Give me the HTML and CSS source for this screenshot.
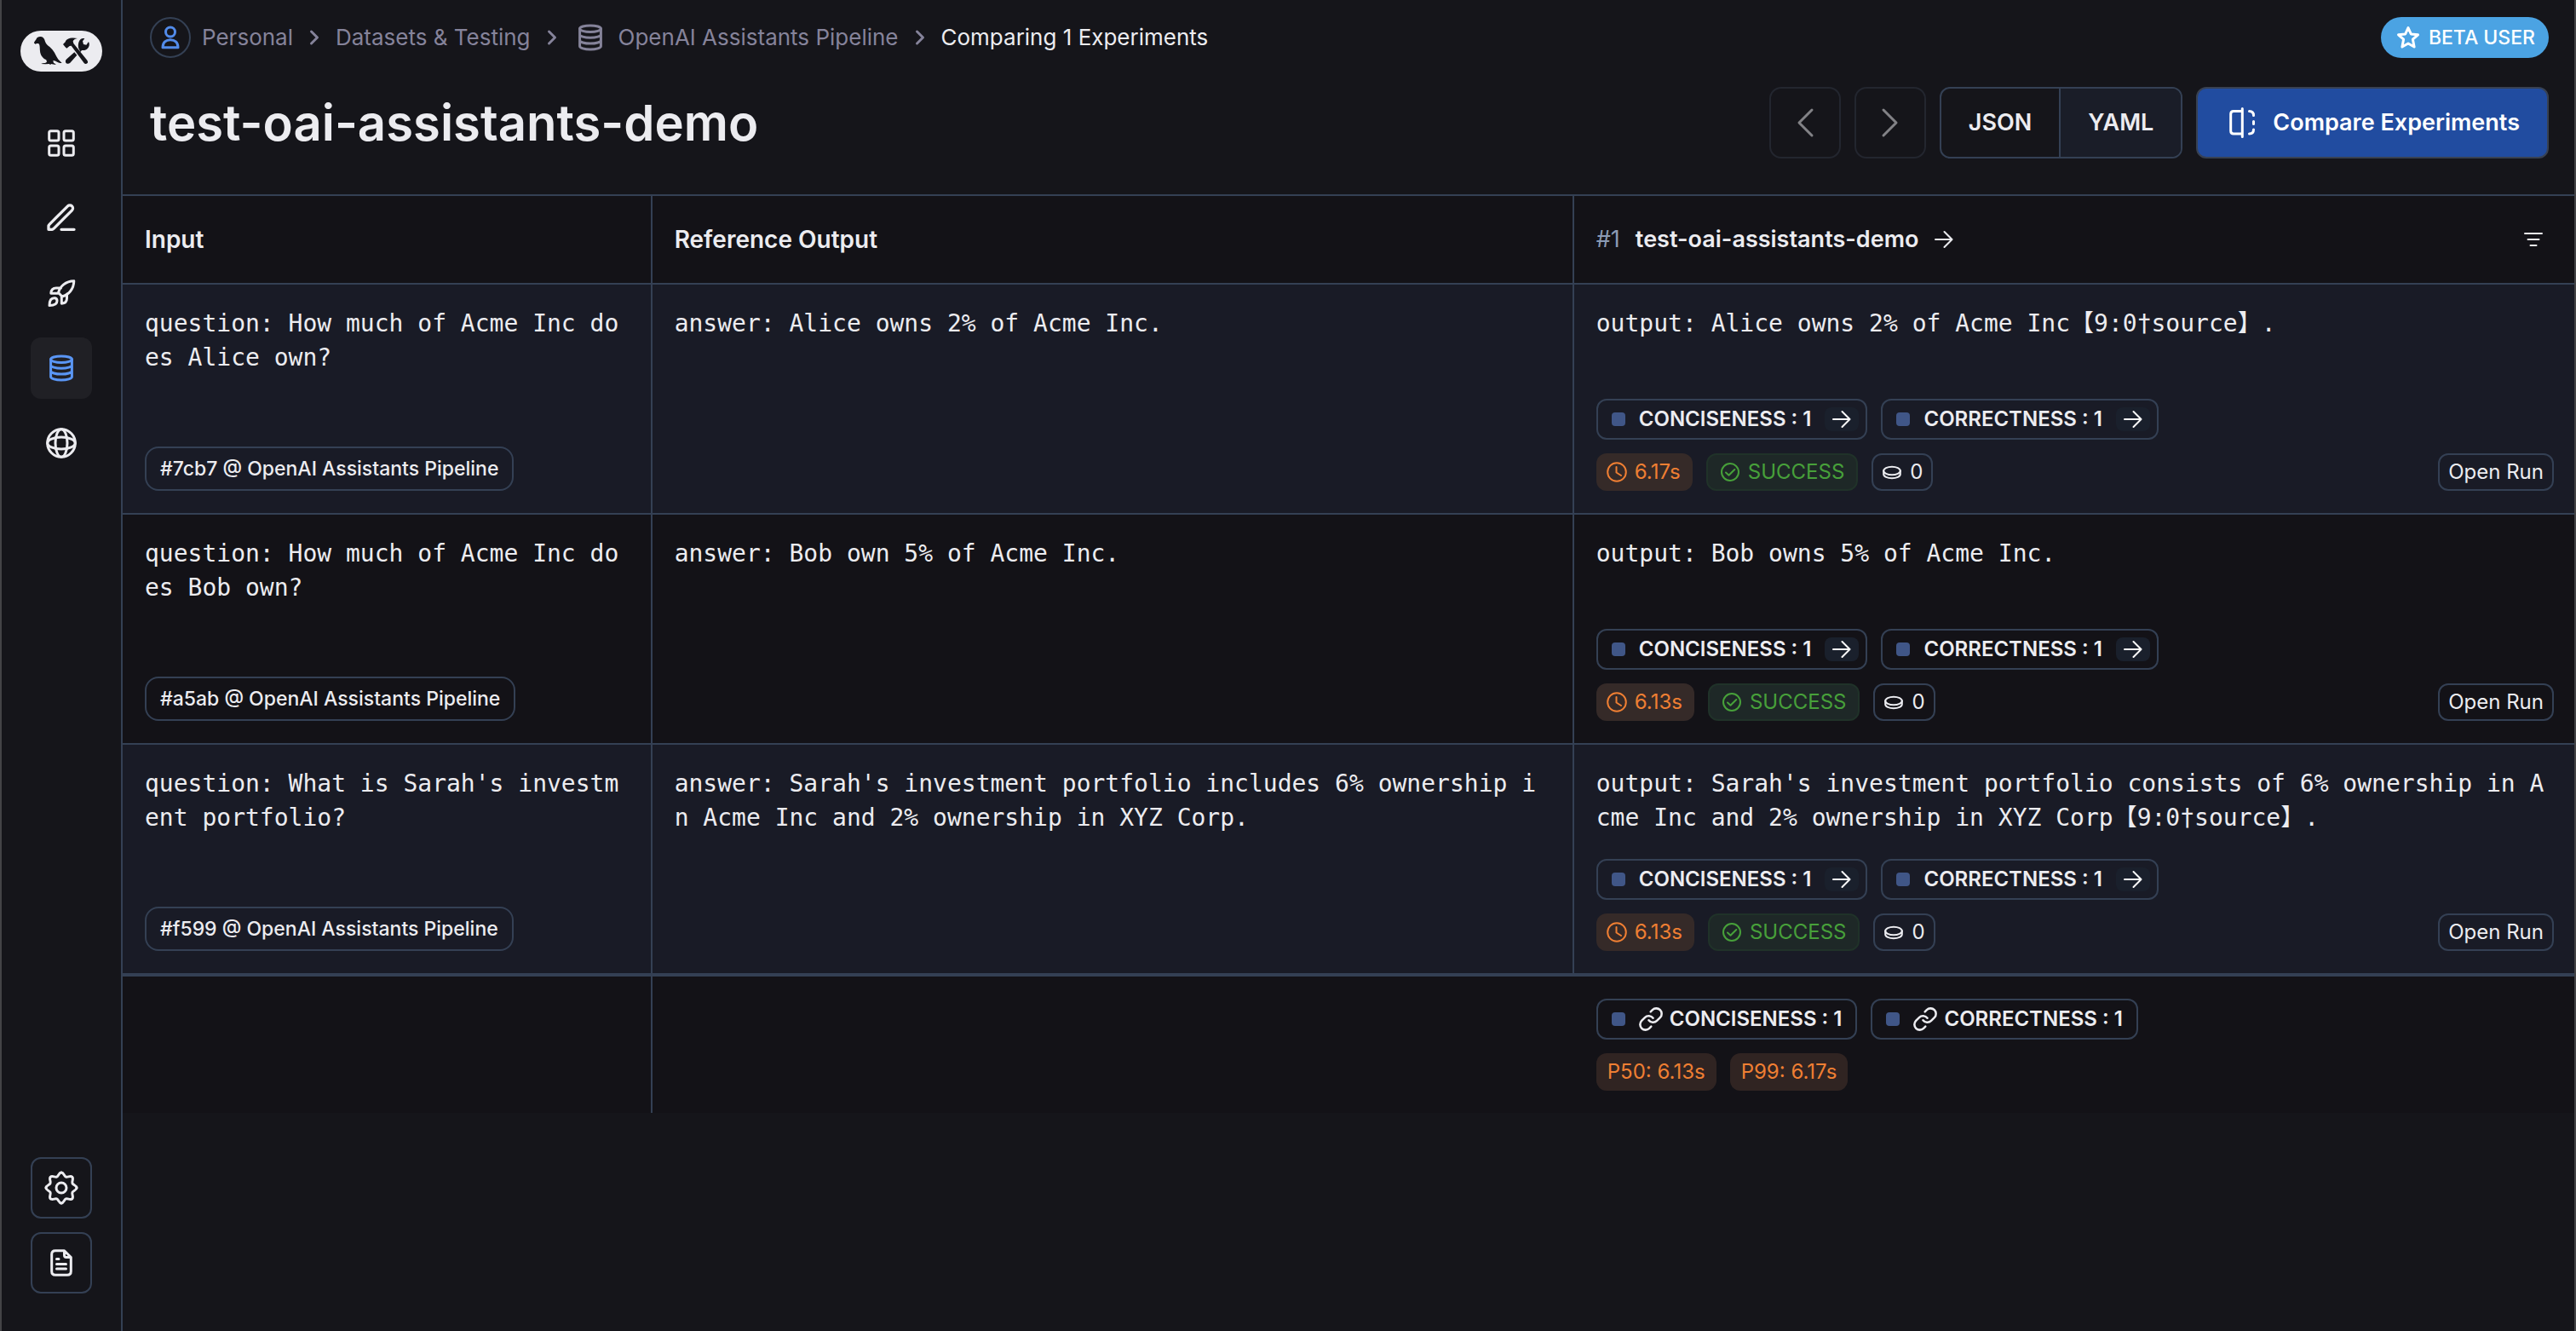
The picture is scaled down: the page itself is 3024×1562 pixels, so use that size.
FILE: index.html
```html
<!DOCTYPE html>
<html lang="en">
<head>
<meta charset="utf-8">
<meta name="viewport" content="width=device-width, initial-scale=1">
<title>Comparing 1 Experiments</title>
<link rel="stylesheet" href="styles.css">
</head>
<body>
<svg class="sprite" aria-hidden="true">
  <symbol id="i-db" viewBox="0 0 40 40"><ellipse cx="20" cy="9.7" rx="12.4" ry="3.8"/><path d="M7.6 9.7V30.2C7.6 32.3 13.1 34 20 34s12.4-1.7 12.4-3.8V9.7M7.6 16.5c0 2.1 5.5 3.8 12.4 3.8s12.4-1.7 12.4-3.8M7.6 23.3c0 2.1 5.5 3.8 12.4 3.8s12.4-1.7 12.4-3.8"/></symbol>
  <symbol id="i-sep" viewBox="0 0 24 24"><path d="M8.500 5l7 7-7 7"/></symbol>
  <symbol id="i-arrow" viewBox="0 0 24 24"><path d="M2 12h19M12.500 3L21.500 12l-9 9"/></symbol>
  <symbol id="i-clock" viewBox="0 0 24 24"><circle cx="12" cy="12" r="10.800"/><path d="M11.500 6v6.500l5.500 3.500"/></symbol>
  <symbol id="i-check" viewBox="0 0 24 24"><circle cx="12" cy="12" r="10"/><path d="M7 12.500l3.500 3.200 6.800-6.700"/></symbol>
  <symbol id="i-coin" viewBox="0 0 24 24"><ellipse cx="12" cy="10.500" rx="9.800" ry="4.800"/><path d="M2.200 10.500v4c0 2.700 4.400 4.800 9.800 4.800s9.800-2.100 9.800-4.800v-4"/></symbol>
  <symbol id="i-link" viewBox="1 1 22 22"><path d="M10 13a5 5 0 0 0 7.540.540l3-3a5 5 0 0 0-7.070-7.070l-1.720 1.710M14 11a5 5 0 0 0-7.540-.540l-3 3a5 5 0 0 0 7.070 7.070l1.710-1.710"/></symbol>
</svg>
<div class="app">
  <aside class="sidebar">
    <a class="logo" href="#" aria-label="Home">
      <svg viewBox="72 108 288 144" aria-hidden="true">
        <path d="M120 153c0-8 6-11 8-16 2-6 9-9 16-8 8 1 13 8 15 17 2 8 9 13 16 19 15 13 20 27 27 39 4 7 10 12 16 18-9 0-15-2-22-7-3-1-6-2-9-2l2 9c4 1 6 3 8 6l-17-3-3 4-3-4-14 1-15-1c3-3 9-3 14-3l6-4-2-7c-12-5-21-17-22-31-1-9 0-17-3-25l-4-2c-4 0-9 0-9 4l-2-4z"/>
        <path d="M222 156l8-8c1-7 8-12 17-14 9-1 18-1 26 1-9 2-14 5-16 10l2 8 48 59c3 5 3 8 0 11-3 3-8 3-11-1l-45-61-6 1-10 8-5-4z"/>
        <path d="M276 168c-2-12 1-24 8-30 4-3 9-4 14-2l-7 9 3 11 10 2 8-11c5 9 2 20-6 26-5 4-12 4-18 4l-5 6zM262 184l9 10-24 27c-5 5-12 4-15 0-2-4-2-9 3-13z"/>
      </svg>
    </a>
    <nav class="side-nav" aria-label="Main">
      <a class="side-item" href="#" aria-label="Dashboard"><svg class="icon i40" viewBox="0 0 40 40"><rect x="5.700" y="5.700" width="11.300" height="11.300" rx="2"/><rect x="23" y="5.700" width="11.300" height="11.300" rx="2"/><rect x="5.700" y="23" width="11.300" height="11.300" rx="2"/><rect x="23" y="23" width="11.300" height="11.300" rx="2"/></svg></a>
      <a class="side-item" href="#" aria-label="Annotate"><svg class="icon pen" viewBox="0 0 24 24"><path d="M12 20h9M3 20h1.700c.500 0 .700 0 .900-.100.200 0 .400-.100.600-.200.200-.100.400-.300.700-.600L19.500 6.500c.800-.800.800-2.200 0-3s-2.200-.800-3 0L3.900 16.100c-.300.300-.500.500-.600.700-.100.200-.200.400-.300.600V20z"/></svg></a>
      <a class="side-item" href="#" aria-label="Deployments"><svg class="icon i40" viewBox="0 0 40 40"><path d="M16.500 19.500C18.500 12 25 6 34.800 5.800 34.600 15.500 28.500 22 21 24zM19.500 14H14c-4 0-6 2.500-6.200 6.200h8.500M26.500 21v5c0 4-2.500 6-6.200 6.200V24M6 34.500C6 29 8 25.800 11.800 25.800c2 0 3.200 1.200 3.200 3.200 0 3.700-3.500 5.500-9 5.500z"/></svg></a>
      <a class="side-item active" href="#" aria-label="Datasets and testing" aria-current="page"><svg class="icon i40"><use href="#i-db"/></svg></a>
      <a class="side-item" href="#" aria-label="Hub"><svg class="icon i40" viewBox="0 0 40 40"><circle cx="20" cy="20" r="16.300"/><ellipse cx="20" cy="20" rx="7" ry="16.300"/><ellipse cx="20" cy="20" rx="16.300" ry="7"/></svg></a>
    </nav>
    <div class="side-foot">
      <button class="side-button" type="button" aria-label="Settings"><svg class="icon i40" viewBox="-20 -20 40 40"><circle r="6"/><path id="tooth" d="M0-18C3-18 3.140-13.850 5.360-12.930 7.580-12.010 10.610-14.850 12.730-12.730"/><use href="#tooth" transform="rotate(45)"/><use href="#tooth" transform="rotate(90)"/><use href="#tooth" transform="rotate(135)"/><use href="#tooth" transform="rotate(180)"/><use href="#tooth" transform="rotate(225)"/><use href="#tooth" transform="rotate(270)"/><use href="#tooth" transform="rotate(315)"/></svg></button>
      <button class="side-button" type="button" aria-label="Documentation"><svg class="icon i40" viewBox="0 0 40 40"><path d="M23.500 5.700H13c-3 0-4.300 1.300-4.300 4.300v20c0 3 1.300 4.300 4.300 4.300h14c3 0 4.300-1.300 4.300-4.300V13.500zM23.500 5.700v5.600c0 1.500.700 2.200 2.200 2.200h5.600M14.500 15.500H17M14.500 21.500h11M14.500 27h11"/></svg></button>
    </div>
  </aside>

  <main class="main">
    <header class="page-head">
      <div class="topline">
        <nav aria-label="Breadcrumb">
          <ol class="crumbs">
            <li><a class="crumb person" href="#"><span class="avatar"><svg class="icon i28" viewBox="0 0 28 28"><circle cx="14" cy="7.500" r="5.500"/><path d="M5 25.700c0-6 4-9 9-9s9 3 9 9z"/></svg></span>Personal</a></li>
            <li><svg class="icon i24"><use href="#i-sep"/></svg><a class="crumb" href="#">Datasets &amp; Testing</a></li>
            <li><svg class="icon i24"><use href="#i-sep"/></svg><a class="crumb" href="#"><svg class="icon i40"><use href="#i-db"/></svg>OpenAI Assistants Pipeline</a></li>
            <li><svg class="icon i24"><use href="#i-sep"/></svg><span class="current" aria-current="page">Comparing 1 Experiments</span></li>
          </ol>
        </nav>
        <span class="beta"><svg class="icon i28" viewBox="0 0 28 28"><path d="M14 2.500l3.300 7.400 8.200.900-6.100 5.400 1.700 8.800L14 21l-7.100 4 1.700-8.800-6.100-5.400 8.200-.900z"/></svg>BETA USER</span>
      </div>
      <div class="titleline">
        <h1>test-oai-assistants-demo</h1>
        <div class="actions">
          <button class="pager" type="button" disabled aria-label="Previous"><svg class="icon i40" viewBox="0 0 40 40"><path d="M28 5L13 20l15 15"/></svg></button>
          <button class="pager" type="button" disabled aria-label="Next"><svg class="icon i40" viewBox="0 0 40 40"><path d="M12 5l15 15-15 15"/></svg></button>
          <div class="format" role="group" aria-label="Format">
            <button type="button">JSON</button>
            <button class="selected" type="button" aria-pressed="true">YAML</button>
          </div>
          <button class="compare" type="button"><svg class="icon compare-icon" viewBox="0 0 36 40"><path d="M18.300 6.500H8c-2.200 0-3.300 1.100-3.300 3.300v20c0 2.200 1.100 3.300 3.300 3.300h10.300M18.300 3.500v33M26.500 6.500c3 0 5 1 5 5M31.500 18.500v3M26.500 33c3 0 5-1 5-5"/></svg>Compare Experiments</button>
        </div>
      </div>
    </header>

    <table class="results">
      <colgroup><col class="col-input"><col class="col-reference"><col class="col-output"></colgroup>
      <thead>
        <tr>
          <th scope="col">Input</th>
          <th scope="col">Reference Output</th>
          <th scope="col"><div class="exp-head"><span class="exp-num">#1</span><a class="exp-name" href="#">test-oai-assistants-demo<svg class="icon i24"><use href="#i-arrow"/></svg></a><button class="filter" type="button" aria-label="Filter"><svg class="icon i24" viewBox="0 0 24 24"><path d="M2 5h20M5.500 12h13M8.500 19h7"/></svg></button></div></th>
        </tr>
      </thead>
      <tbody>
        <tr>
          <td><div class="cell"><p>question: How much of Acme Inc does Alice own?</p><a class="source" href="#">#7cb7 @ OpenAI Assistants Pipeline</a></div></td>
          <td><div class="cell"><p>answer: Alice owns 2% of Acme Inc.</p></div></td>
          <td><div class="cell"><p>output: Alice owns 2% of Acme Inc【9:0†source】.</p>
            <div class="meta">
              <div class="chips"><a class="metric" href="#"><i class="swatch"></i>CONCISENESS : 1<span class="go"><svg class="icon i24"><use href="#i-arrow"/></svg></span></a><a class="metric" href="#"><i class="swatch"></i>CORRECTNESS : 1<span class="go"><svg class="icon i24"><use href="#i-arrow"/></svg></span></a></div>
              <div class="chips"><span class="tag time"><svg class="icon i24"><use href="#i-clock"/></svg>6.17s</span><span class="tag success"><svg class="icon i24"><use href="#i-check"/></svg>SUCCESS</span><span class="tag"><svg class="icon i24"><use href="#i-coin"/></svg>0</span><button class="tag open" type="button">Open Run</button></div>
            </div></div></td>
        </tr>
        <tr>
          <td><div class="cell"><p>question: How much of Acme Inc does Bob own?</p><a class="source" href="#">#a5ab @ OpenAI Assistants Pipeline</a></div></td>
          <td><div class="cell"><p>answer: Bob own 5% of Acme Inc.</p></div></td>
          <td><div class="cell"><p>output: Bob owns 5% of Acme Inc.</p>
            <div class="meta">
              <div class="chips"><a class="metric" href="#"><i class="swatch"></i>CONCISENESS : 1<span class="go"><svg class="icon i24"><use href="#i-arrow"/></svg></span></a><a class="metric" href="#"><i class="swatch"></i>CORRECTNESS : 1<span class="go"><svg class="icon i24"><use href="#i-arrow"/></svg></span></a></div>
              <div class="chips"><span class="tag time"><svg class="icon i24"><use href="#i-clock"/></svg>6.13s</span><span class="tag success"><svg class="icon i24"><use href="#i-check"/></svg>SUCCESS</span><span class="tag"><svg class="icon i24"><use href="#i-coin"/></svg>0</span><button class="tag open" type="button">Open Run</button></div>
            </div></div></td>
        </tr>
        <tr>
          <td><div class="cell"><p>question: What is Sarah's investment portfolio?</p><a class="source" href="#">#f599 @ OpenAI Assistants Pipeline</a></div></td>
          <td><div class="cell"><p>answer: Sarah's investment portfolio includes 6% ownership in Acme Inc and 2% ownership in XYZ Corp.</p></div></td>
          <td><div class="cell"><p>output: Sarah's investment portfolio consists of 6% ownership in Acme Inc and 2% ownership in XYZ Corp【9:0†source】.</p>
            <div class="meta">
              <div class="chips"><a class="metric" href="#"><i class="swatch"></i>CONCISENESS : 1<span class="go"><svg class="icon i24"><use href="#i-arrow"/></svg></span></a><a class="metric" href="#"><i class="swatch"></i>CORRECTNESS : 1<span class="go"><svg class="icon i24"><use href="#i-arrow"/></svg></span></a></div>
              <div class="chips"><span class="tag time"><svg class="icon i24"><use href="#i-clock"/></svg>6.13s</span><span class="tag success"><svg class="icon i24"><use href="#i-check"/></svg>SUCCESS</span><span class="tag"><svg class="icon i24"><use href="#i-coin"/></svg>0</span><button class="tag open" type="button">Open Run</button></div>
            </div></div></td>
        </tr>
      </tbody>
      <tfoot>
        <tr>
          <td></td>
          <td></td>
          <td><div class="meta">
            <div class="chips"><span class="metric total"><i class="swatch"></i><span class="linked"><svg class="icon link"><use href="#i-link"/></svg>CONCISENESS : 1</span></span><span class="metric total"><i class="swatch"></i><span class="linked"><svg class="icon link"><use href="#i-link"/></svg>CORRECTNESS : 1</span></span></div>
            <div class="chips"><span class="tag time stat">P50: 6.13s</span><span class="tag time stat">P99: 6.17s</span></div>
          </div></td>
        </tr>
      </tfoot>
    </table>
  </main>
</div>
</body>
</html>
```
FILE: styles.css
```css
:root {
  --bg: #15151a;
  --table: #131217;
  --stripe: #191b26;
  --line: #344054;
  --text: #ececf0;
  --muted: #85839a;
  --blue: #528bea;
  --orange: #ef7f33;
  --green: #47a03a;
}

*, *::before, *::after { box-sizing: border-box; }

body {
  margin: 0;
  background: var(--bg);
  color: var(--text);
  font: 400 26px/40px Inter, "Liberation Sans", sans-serif;
}

a { color: inherit; text-decoration: none; }
button { margin: 0; padding: 0; border: 0; background: none; color: inherit; font: inherit; }
p, h1, ol { margin: 0; padding: 0; }

.sprite { display: none; }
.icon { display: block; flex: none; fill: none; stroke: currentColor; stroke-width: 2; stroke-linecap: round; stroke-linejoin: round; }
.i24 { width: 24px; height: 24px; }
.i28 { width: 28px; height: 28px; stroke-width: 3; }
.i40 { width: 40px; height: 40px; stroke-width: 3; }
.pen { width: 40px; height: 40px; }
.link { width: 28px; height: 28px; }

.app {
  display: flex;
  min-height: 100vh;
  border: solid #434346;
  border-width: 0 2px;
}

/* sidebar */
.sidebar {
  display: flex;
  flex: none;
  flex-direction: column;
  align-items: center;
  width: 142px;
  padding: 36px 0 44px;
  border-right: 2px solid var(--line);
}
.logo { width: 96px; height: 48px; border-radius: 24px; background: var(--text); }
.logo svg { display: block; width: 96px; height: 48px; fill: var(--bg); }
.side-nav { display: flex; flex-direction: column; gap: 16px; margin-top: 48px; }
.side-item { display: grid; place-items: center; width: 72px; height: 72px; border-radius: 12px; }
.side-item.active { background: #202025; color: #5a96f5; }
.side-foot { display: flex; flex-direction: column; gap: 16px; margin-top: auto; }
.side-button { display: grid; place-items: center; width: 72px; height: 72px; border: 2px solid var(--line); border-radius: 12px; }

/* page header */
.main { flex: 1; min-width: 0; }
.page-head { padding: 20px 30px 42px 32px; border-bottom: 2px solid var(--line); }
.topline, .titleline { display: flex; align-items: center; justify-content: space-between; }
.crumbs, .crumbs li, .crumb { display: flex; align-items: center; gap: 13px; }
.crumbs { list-style: none; color: var(--muted); }
.avatar { display: grid; place-items: center; width: 48px; height: 48px; border: 2px solid var(--line); border-radius: 50%; color: var(--blue); }
.current { color: var(--text); }
.crumbs .i24 { stroke-width: 3; }
.beta { display: flex; align-items: center; gap: 10px; height: 48px; padding: 0 16px 0 18px; border-radius: 24px; background: #4ba3e3; color: #fff; font-size: 23px; font-weight: 500; }

.titleline { margin-top: 34px; }
h1 { font-size: 58px; font-weight: 600; line-height: 84px; }
.actions { display: flex; gap: 16px; font-size: 27px; font-weight: 600; }
.pager { display: grid; place-items: center; width: 84px; height: 84px; border: 2px solid #23262f; border-radius: 14px; color: #828286; }
.format { display: flex; height: 84px; border: 2px solid var(--line); border-radius: 12px; overflow: hidden; }
.format button { padding: 0 32px; }
.format .selected { border-left: 2px solid var(--line); background: #1a1d28; }
.compare { display: flex; align-items: center; gap: 18px; height: 84px; padding: 0 32px 0 34px; border: 2px solid #384152; border-radius: 12px; background: #214ca0; color: #fff; }
.compare-icon { width: 36px; height: 40px; stroke-width: 3; }

/* results table */
.results { width: 100%; border-spacing: 0; table-layout: fixed; background: var(--table); }
.col-input { width: 21.6%; }
.col-reference { width: 37.6%; }
th, td { padding: 26px; border-bottom: 2px solid var(--line); text-align: left; vertical-align: top; }
th { height: 104px; padding-block: 0; font-size: 28px; font-weight: 600; vertical-align: middle; }
th:not(:last-child), td:not(:last-child) { border-right: 2px solid var(--line); }
th:last-child, td:last-child { padding-right: 24px; }
tbody tr:nth-child(odd) { background: var(--stripe); }
tbody tr:last-child td { border-bottom-width: 4px; }
tfoot td { border-bottom: 0; }
tfoot td:nth-child(2) { border-right: 0; }

.exp-head, .exp-name { display: flex; align-items: center; gap: 18px; }
.exp-head { font-size: 27px; }
.exp-num { color: #8b9ab4; font-weight: 400; }
.filter { display: grid; place-items: center; width: 48px; height: 48px; margin-left: auto; }

.cell { display: flex; flex-direction: column; align-items: flex-start; justify-content: space-between; min-height: 216px; }
.cell p { font: 28px/40px "DejaVu Sans Mono", "Noto Sans CJK SC", monospace; word-break: break-all; }
.source { display: flex; align-items: center; height: 52px; padding: 0 16px; border: 2px solid var(--line); border-radius: 16px; font-size: 23px; font-weight: 500; }

.meta { display: flex; flex-direction: column; gap: 16px; width: 100%; }
.chips { display: flex; flex-wrap: wrap; gap: 16px; }
.metric { display: flex; align-items: center; gap: 16px; height: 48px; padding: 0 8px 0 16px; border: 2px solid var(--line); border-radius: 12px; font-size: 24px; font-weight: 600; }
.metric.total { padding-right: 16px; }
.swatch { width: 16px; height: 16px; border-radius: 4px; background: #405687; }
.go { display: grid; place-items: center; width: 40px; height: 28px; border-radius: 8px; background: #1a202c; color: #fff; }
.linked { display: flex; align-items: center; gap: 8px; }

.tag { display: flex; align-items: center; gap: 9px; height: 44px; padding: 0 10px; border: 2px solid var(--line); border-radius: 12px; font-size: 24px; }
.time { padding: 0 14px 0 12px; border: 0; background: #352a28; color: var(--orange); }
.stat { padding: 0 13px; background: #302422; }
.success { padding: 0 14px; border-color: #203229; background: #1e2827; color: var(--green); }
.open { margin-left: auto; }
```
